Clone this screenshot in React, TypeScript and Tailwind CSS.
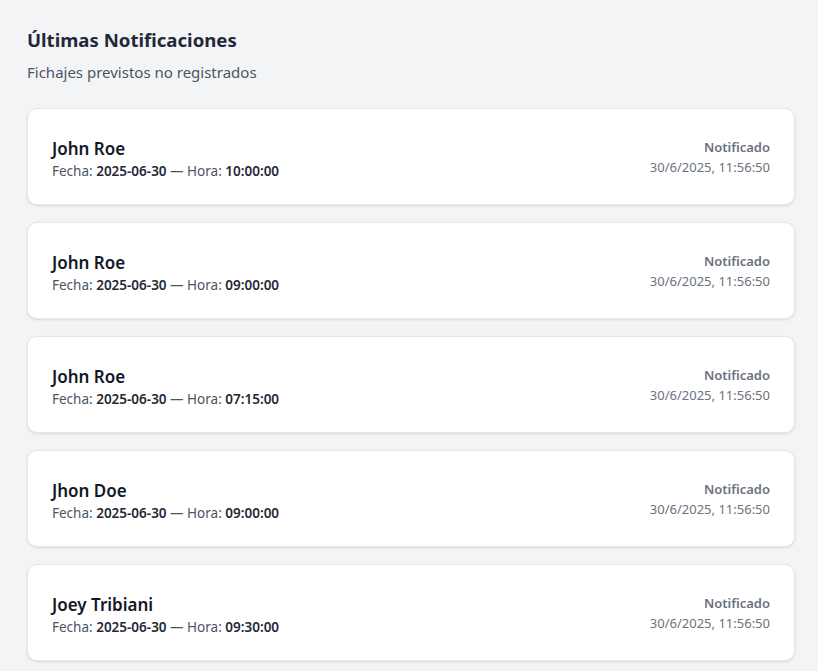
const notifications = [
  { name: "John Roe", fecha: "2025-06-30", hora: "10:00:00", sent: "30/6/2025, 11:56:50" },
  { name: "John Roe", fecha: "2025-06-30", hora: "09:00:00", sent: "30/6/2025, 11:56:50" },
  { name: "John Roe", fecha: "2025-06-30", hora: "07:15:00", sent: "30/6/2025, 11:56:50" },
  { name: "Jhon Doe", fecha: "2025-06-30", hora: "09:00:00", sent: "30/6/2025, 11:56:50" },
  { name: "Joey Tribiani", fecha: "2025-06-30", hora: "09:30:00", sent: "30/6/2025, 11:56:50" },
];

export default function App() {
  return (
    <div
      className="min-h-screen bg-[#f3f4f6] pl-[27px] pr-[23px] pt-[26px] pb-6"
      style={{ fontFamily: '"Noto Sans", "Open Sans", sans-serif' }}
    >
      <h2 className="text-[18.6px] leading-[28px] font-bold text-[#1f2937]">Últimas Notificaciones</h2>
      <p className="mt-[6px] text-[15px] leading-[24px] text-[#4b5563]">Fichajes previstos no registrados</p>

      <div className="mt-6 flex flex-col gap-[17px]">
        {notifications.map((n, i) => (
          <div
            key={i}
            className="flex items-center justify-between h-[97px] rounded-[10px] border border-[#e5e7eb] bg-white px-6 shadow-[0_1px_3px_rgba(0,0,0,0.08),0_1px_2px_rgba(0,0,0,0.04)]"
          >
            <div className="flex flex-col pt-[4px]">
              <span className="text-[17px] leading-[25px] font-semibold text-[#111827]">{n.name}</span>
              <span className="text-[13.5px] leading-[21px] text-[#4b5563]">
                Fecha: <b className="font-semibold text-[#1f2937]">{n.fecha}</b> — Hora:{" "}
                <b className="font-semibold text-[#1f2937]">{n.hora}</b>
              </span>
            </div>
            <div className="flex flex-col items-end">
              <span className="text-[13px] leading-[20px] font-semibold text-[#6b7280]">Notificado</span>
              <span className="text-[13px] leading-[20px] text-[#6b7280]">{n.sent}</span>
            </div>
          </div>
        ))}
      </div>
    </div>
  );
}
